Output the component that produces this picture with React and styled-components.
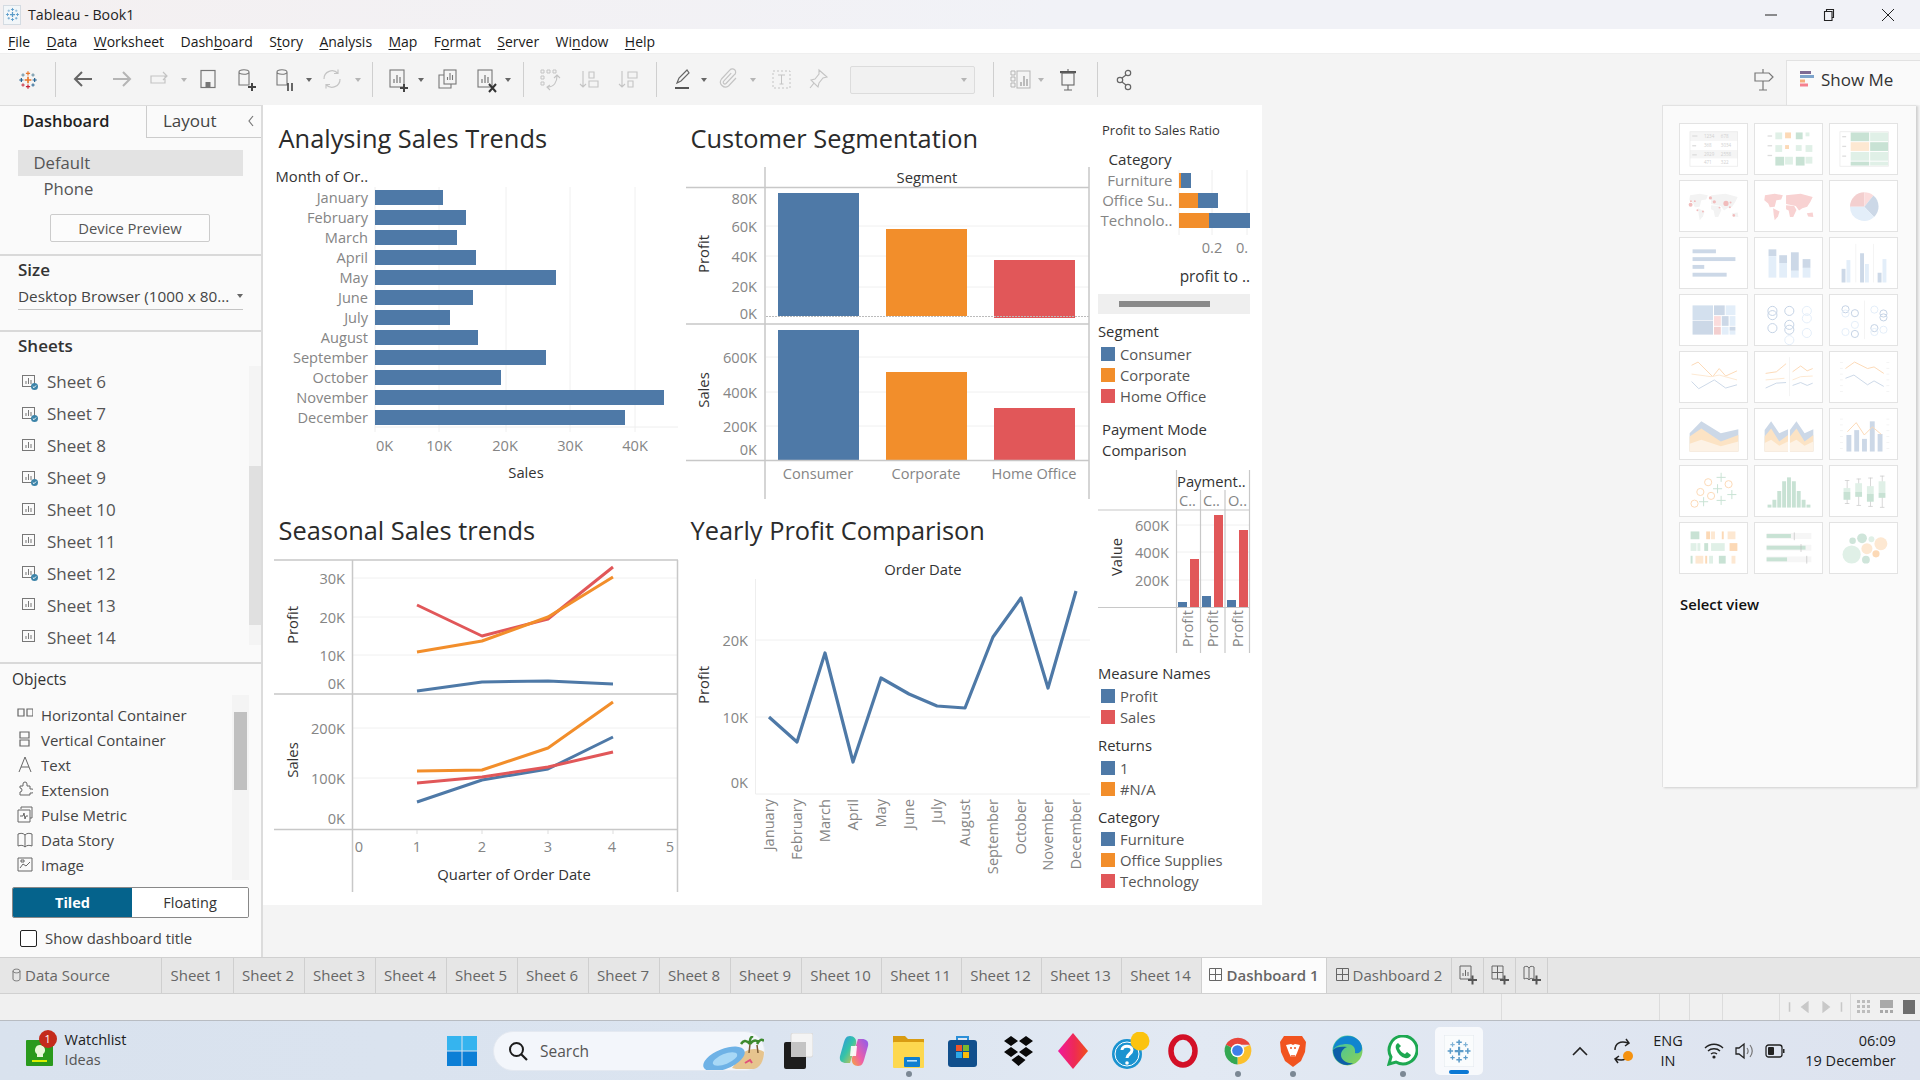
import React from "react";
import styled, { createGlobalStyle } from "styled-components";

const FONT = `"Open Sans", "Noto Sans", sans-serif`;
const BLUE = "#4e79a7";
const ORANGE = "#f28e2b";
const RED = "#e15759";

const GlobalStyle = createGlobalStyle`
  html, body { margin: 0; padding: 0; background: #f4f4f4; overflow: hidden; }
  * { box-sizing: border-box; }
`;

const Page = styled.div`
  width: 1920px;
  height: 1080px;
  display: flex;
  flex-direction: column;
  font-family: ${FONT};
  color: #333;
  overflow: hidden;
`;

/* ---------- window chrome ---------- */
const TitleBar = styled.div`
  height: 29px;
  display: flex;
  align-items: center;
  background: linear-gradient(90deg, #f4f0f1 0%, #f1f2f7 55%);
  font-size: 14.2px;
  color: #1f1f1f;
`;
const TitleIcon = styled.div`
  width: 18px;
  height: 20px;
  margin: 0 7px 0 3px;
  background: #f2f6f9;
  border: 1px solid #d4dbe2;
  display: flex;
  align-items: center;
  justify-content: center;
`;
const WindowButtons = styled.div`
  margin-left: auto;
  display: flex;
  align-items: center;
  padding-right: 25px;
  gap: 46px;
`;
const MenuBar = styled.div`
  height: 25px;
  background: #fff;
  display: flex;
  align-items: center;
  padding-left: 8px;
  gap: 16.4px;
  font-size: 14px;
  color: #1a1a1a;
  border-bottom: 1px solid #efefef;
`;
const Mnemonic = styled.span`
  text-decoration: underline;
  text-underline-offset: 2px;
`;
const Toolbar = styled.div`
  height: 51px;
  background: #f4f4f4;
  display: flex;
  align-items: center;
`;
const ToolSlot = styled.div`
  width: ${(p) => p.$w}px;
  margin-left: ${(p) => p.$gap}px;
  flex: none;
  display: flex;
  align-items: center;
  justify-content: center;
`;
const ToolSep = styled.div`
  width: 1px;
  height: 35px;
  background: #cfcfcf;
`;
const Caret = styled.div`
  width: 0;
  height: 0;
  border-left: 3px solid transparent;
  border-right: 3px solid transparent;
  border-top: 4px solid ${(p) => (p.$off ? "#b5b5b5" : "#666")};
`;
const SelectBox = styled.div`
  width: 125px;
  height: 28px;
  border: 1px solid #dcdcdc;
  border-radius: 2px;
  background: #f1f1f1;
  display: flex;
  align-items: center;
  justify-content: flex-end;
  padding-right: 7px;
`;
const ShowMeTab = styled.div`
  margin-left: auto;
  align-self: flex-end;
  width: 134px;
  height: 45px;
  background: #fafafa;
  border: 1px solid #e2e2e2;
  border-bottom: none;
  border-right: none;
  display: flex;
  align-items: center;
  padding: 0 0 8px 13px;
  gap: 7px;
  font-size: 17px;
  color: #333;
`;

/* ---------- side panel ---------- */
const Main = styled.div`
  height: 852px;
  display: flex;
`;
const Side = styled.div`
  width: 263px;
  flex: none;
  background: #fafafa;
  border-top: 1px solid #dcdcdc;
  border-right: 2px solid #dcdcdc;
  display: flex;
  flex-direction: column;
`;
const SideTabs = styled.div`
  height: 32px;
  display: flex;
`;
const SideTabActive = styled.div`
  width: 146px;
  padding-left: 22.5px;
  font-size: 16.4px;
  font-weight: 600;
  color: #222;
  line-height: 29px;
`;
const SideTab = styled.div`
  flex: 1;
  display: flex;
  align-items: center;
  justify-content: space-between;
  border-left: 1px solid #ccc;
  border-bottom: 1px solid #ccc;
  padding: 0 6px 2px 16px;
  font-size: 17px;
  color: #444;
`;
const Section = styled.div`
  height: ${(p) => p.$h}px;
  flex: none;
  border-bottom: ${(p) => (p.$last ? "none" : "2px solid #d9d9d9")};
  display: flex;
  flex-direction: column;
`;
const DeviceRow = styled.div`
  height: ${(p) => (p.$on ? "26px" : "25px")};
  margin: ${(p) => (p.$on ? "12px" : "0")} 18px 0;
  padding-left: ${(p) => (p.$on ? "15.5px" : "25.5px")};
  background: ${(p) => (p.$on ? "#e3e3e3" : "transparent")};
  font-size: 16.7px;
  line-height: 25px;
  color: #555;
`;
const PreviewButton = styled.div`
  width: 160px;
  height: 28px;
  margin: 13px 0 0 50px;
  border: 1px solid #ccc;
  border-radius: 2px;
  background: #fcfcfc;
  font-size: 14.8px;
  text-align: center;
  line-height: 26px;
  color: #555;
`;
const SectionHead = styled.div`
  font-size: ${(p) => p.$size || 17}px;
  font-weight: ${(p) => p.$weight || 600};
  color: #333;
  line-height: 22px;
  padding: ${(p) => p.$pad || "3px 0 0 18px"};
`;
const SizeSelect = styled.div`
  margin: 3px 18px 0 18px;
  height: 26px;
  padding-bottom: 2px;
  display: flex;
  align-items: center;
  justify-content: space-between;
  border-bottom: 1px solid #c4c4c4;
  font-size: 15.3px;
  color: #444;
  white-space: nowrap;
`;
const SheetsBody = styled.div`
  display: flex;
  margin-top: 9px;
  height: 279px;
`;
const SheetList = styled.div`
  flex: 1;
  padding: 0 0 0 22px;
`;
const SheetRow = styled.div`
  height: 31.9px;
  display: flex;
  align-items: center;
  gap: 9px;
  font-size: 17px;
  color: #555;
`;
const Track = styled.div`
  width: ${(p) => p.$w}px;
  background: #f4f4f4;
  display: flex;
  flex-direction: column;
  align-items: center;
  padding-top: ${(p) => p.$top}px;
  flex: none;
`;
const Thumb = styled.div`
  width: ${(p) => p.$w}px;
  height: ${(p) => p.$h}px;
  background: ${(p) => p.$c};
`;
const ObjectsBody = styled.div`
  display: flex;
  margin-top: 5px;
  height: 185px;
  padding-right: 12px;
`;
const ObjectList = styled.div`
  flex: 1;
  padding: 7px 0 0 17px;
`;
const ObjectRow = styled.div`
  height: 25px;
  display: flex;
  align-items: center;
  gap: 8px;
  font-size: 15px;
  color: #444;
`;
const Segmented = styled.div`
  margin: 7px 0 0 12px;
  width: 237px;
  height: 31px;
  display: flex;
  border: 1px solid #888;
  border-radius: 2px;
  overflow: hidden;
`;
const SegButton = styled.div`
  width: ${(p) => (p.$on ? "119px" : "auto")};
  flex: ${(p) => (p.$on ? "none" : "1")};
  background: ${(p) => (p.$on ? "#05638c" : "#fff")};
  color: ${(p) => (p.$on ? "#fff" : "#333")};
  font-weight: ${(p) => (p.$on ? 700 : 400)};
  font-size: 14.5px;
  line-height: 29px;
  text-align: center;
`;
const CheckRow = styled.div`
  display: flex;
  align-items: center;
  gap: 8px;
  margin: 10px 0 0 20px;
  font-size: 14.9px;
  color: #444;
`;
const CheckBox = styled.div`
  width: 17px;
  height: 17px;
  border: 1px solid #222;
  border-radius: 2px;
  background: #fff;
`;

/* ---------- dashboard ---------- */
const Canvas = styled.div`
  flex: 1;
  display: flex;
  align-items: flex-start;
  background: #f4f4f4;
`;
const Dashboard = styled.div`
  width: 999px;
  height: 800px;
  background: #fff;
  display: grid;
  grid-template-columns: 417px 410px 172px;
  grid-template-rows: 405px 395px;
`;
const Cell = styled.div`
  display: flex;
  flex-direction: column;
  min-width: 0;
`;
const RightColumn = styled.div`
  grid-column: 3;
  grid-row: 1 / span 2;
  display: flex;
  flex-direction: column;
`;
const SheetTitle = styled.div`
  font-size: 25.4px;
  line-height: 36px;
  height: ${(p) => p.$h}px;
  padding: ${(p) => p.$top}px 0 0 ${(p) => p.$left}px;
  color: #2b2b2b;
  white-space: nowrap;
`;
const ChartSvg = styled.svg`
  display: block;
  flex: none;
`;
const SmallTitle = styled.div`
  padding: ${(p) => p.$pad};
  font-size: ${(p) => p.$size}px;
  line-height: ${(p) => p.$line}px;
  font-weight: 500;
  color: #333;
  white-space: nowrap;
`;
const LegendBlock = styled.div`
  padding: ${(p) => p.$top}px 0 0 8px;
`;
const LegendTitle = styled.div`
  height: 24px;
  line-height: 24px;
  font-size: 14.8px;
  font-weight: 500;
  color: #333;
`;
const LegendRow = styled.div`
  height: 21px;
  display: flex;
  align-items: center;
  gap: 5px;
  padding-left: 3px;
  font-size: 14.8px;
  color: #555;
`;
const Swatch = styled.div`
  width: 14px;
  height: 14px;
  background: ${(p) => p.$c};
`;
const AxisText = styled.text`
  font-family: ${FONT};
  font-size: ${(p) => p.$size || 14.6}px;
  fill: #858585;
  dominant-baseline: central;
`;
const AxisTitle = styled.text`
  font-family: ${FONT};
  font-size: ${(p) => p.$size || 14.8}px;
  font-weight: 500;
  fill: #333;
  dominant-baseline: central;
`;
const DataLine = styled.polyline`
  fill: none;
  stroke: ${(p) => p.$c};
  stroke-width: ${(p) => p.$w || 3};
  stroke-linejoin: round;
`;

/* ---------- show me ---------- */
const ShowMePanel = styled.div`
  margin-left: auto;
  margin-right: 4px;
  width: 254px;
  height: 682px;
  background: #fafafa;
  border-left: 1px solid #e2e2e2;
  border-top: 1px solid #e2e2e2;
  box-shadow: 2px 1px 2px #cfcfcf;
  padding: 17px 0 0 16px;
`;
const TileGrid = styled.div`
  display: grid;
  grid-template-columns: repeat(3, 69px);
  grid-auto-rows: 52px;
  column-gap: 6px;
  row-gap: 5px;
`;
const Tile = styled.div`
  background: #fff;
  border: 1px solid #e3e3e3;
  overflow: hidden;
`;
const TileSvg = styled.svg`
  display: block;
  width: 100%;
  height: 100%;
`;
const SelectView = styled.div`
  margin: 20px 0 0 1px;
  font-size: 14.8px;
  font-weight: 600;
  color: #111;
`;

/* ---------- bottom bars ---------- */
const TabBar = styled.div`
  height: 37px;
  background: #e6e6e6;
  border-top: 1px solid #d0d0d0;
  border-bottom: 1px solid #d0d0d0;
  display: flex;
`;
const SheetTab = styled.div`
  width: ${(p) => p.$w}px;
  flex: none;
  display: flex;
  align-items: center;
  justify-content: ${(p) => (p.$left ? "flex-start" : "center")};
  gap: 4px;
  padding: 0 ${(p) => (p.$pr || 0)}px 2px ${(p) => (p.$left ? 12 : 0)}px;
  border-right: 1px solid #cfcfcf;
  background: ${(p) => (p.$on ? "#fcfcfc" : "transparent")};
  font-size: 15px;
  font-weight: ${(p) => (p.$on ? 600 : 400)};
  color: #666;
  white-space: nowrap;
`;
const StatusBar = styled.div`
  height: 27px;
  background: #f0f0f0;
  border-bottom: 1px solid #b8bcc2;
  display: flex;
`;
const StatusCell = styled.div`
  width: ${(p) => p.$w}px;
  flex: none;
  border-left: ${(p) => (p.$plain ? "none" : "1px solid #dcdcdc")};
  display: flex;
  align-items: center;
  justify-content: center;
  gap: ${(p) => p.$gap || 0}px;
`;
const TaskBar = styled.div`
  height: 59px;
  display: flex;
  align-items: center;
  background: linear-gradient(90deg, #d9e2ee 0%, #dbe4f0 40%, #e2e9f3 62%, #dde3ef 100%);
`;
const TaskItem = styled.div`
  width: ${(p) => p.$w}px;
  margin-left: ${(p) => p.$gap}px;
  flex: none;
  height: 48px;
  position: relative;
  display: flex;
  align-items: center;
  justify-content: center;
  border-radius: 5px;
  background: ${(p) => (p.$on ? "rgba(255,255,255,.75)" : "transparent")};
  &::after {
    content: "";
    display: ${(p) => (p.$dot ? "block" : "none")};
    position: absolute;
    bottom: ${(p) => (p.$on ? "1px" : "-2px")};
    left: 50%;
    transform: translateX(-50%);
    width: ${(p) => (p.$on ? "20px" : "6px")};
    height: ${(p) => (p.$on ? "4px" : "6px")};
    border-radius: 3px;
    background: ${(p) => (p.$on ? "#0a78d4" : "#7c8894")};
  }
`;
const Watch = styled.div`
  display: flex;
  align-items: center;
  gap: 12px;
`;
const WatchIcon = styled.div`
  position: relative;
  width: 27px;
  height: 27px;
  margin-top: 6px;
`;
const Badge = styled.div`
  position: absolute;
  left: 13px;
  top: -10px;
  width: 18px;
  height: 18px;
  border-radius: 50%;
  background: #c42b1c;
  color: #fff;
  font-size: 11px;
  line-height: 18px;
  text-align: center;
`;
const TwoLines = styled.div`
  font-size: ${(p) => p.$size || 14.5}px;
  line-height: 20px;
  text-align: ${(p) => p.$align || "left"};
  color: #1c1c1c;
  white-space: nowrap;
  margin-top: ${(p) => p.$up || 0}px;
`;
const Muted = styled.div`
  color: #555;
`;
const SearchPill = styled.div`
  width: 272px;
  height: 40px;
  border-radius: 20px;
  background: #f3f6fb;
  border: 1px solid #e4e9f1;
  display: flex;
  align-items: center;
  gap: 12px;
  padding-left: 14px;
  font-size: 15.5px;
  color: #555;
  position: relative;
`;
const SearchArt = styled.svg`
  position: absolute;
  right: 0;
  top: 4px;
`;

/* ---------- helpers ---------- */
const spaced = (items) => {
  let edge = 0;
  return items.map((it) => {
    const gap = it.x - edge;
    edge = it.x + it.w;
    return { ...it, gap };
  });
};

const Line = ({ d, c = "#666", w = 1.5, fill = "none" }) => (
  <path d={d} stroke={c} strokeWidth={w} fill={fill} />
);

const TableauMark = ({ size = 24, colored = true }) => {
  const plus = (x, y, r, c, w) => (
    <path key={`${x}-${y}`} d={`M${x - r} ${y}H${x + r}M${x} ${y - r}V${y + r}`} stroke={c} strokeWidth={w} />
  );
  const a = colored ? "#e8762c" : "#5b9bc9";
  const b = colored ? "#1f5f8f" : "#5b9bc9";
  const c = colored ? "#c72035" : "#5b9bc9";
  const d = colored ? "#5b879b" : "#7fb2d6";
  return (
    <svg width={size} height={size} viewBox="0 0 24 24">
      {plus(12, 12, 4, a, 2)}
      {plus(12, 4, 2.5, a, 1.4)}
      {plus(12, 20, 2.5, c, 1.4)}
      {plus(4, 12, 2.5, b, 1.4)}
      {plus(20, 12, 2.5, b, 1.4)}
      {plus(6, 6, 2, d, 1.1)}
      {plus(18, 6, 2, d, 1.1)}
      {plus(6, 18, 2, c, 1.1)}
      {plus(18, 18, 2, b, 1.1)}
    </svg>
  );
};

const ICONS = {
  back: <Line d="M21 12H4M11 5l-7 7 7 7" c="#666" w={2} />,
  forward: <Line d="M3 12h17M13 5l7 7-7 7" c="#b5b5b5" w={2} />,
  swap: <Line d="M4 9h14v7H4zM12 9h8M16 5l4 4-4 4" c="#c4c4c4" w={1.2} />,
  save: (
    <>
      <rect x="5" y="3.5" width="14" height="17" fill="none" stroke="#777" strokeWidth="1.2" />
      <rect x="9.5" y="15" width="5" height="5" fill="#777" />
    </>
  ),
  cylPlus: (
    <>
      <Line d="M4 5c0-3 10-3 10 0v13H4zM4 5c0 3 10 3 10 0" c="#777" w={1.1} />
      <Line d="M13 20h8M17 16v8" c="#444" w={2} />
    </>
  ),
  cylPause: (
    <>
      <Line d="M4 5c0-3 10-3 10 0v13H4zM4 5c0 3 10 3 10 0" c="#777" w={1.1} />
      <Line d="M15 16v8M19 16v8" c="#444" w={1.6} />
    </>
  ),
  refresh: <Line d="M20 12a8 8 0 0 1-14 5.5M4 12a8 8 0 0 1 14-5.5M18 2.5v4h-4M6 21.5v-4h4" c="#c4c4c4" w={1.2} />,
  newSheet: (
    <>
      <rect x="4" y="3" width="14" height="17" fill="none" stroke="#777" strokeWidth="1.1" />
      <Line d="M8 16v-4M11 16V8M14 16v-6" c="#777" w={1.2} />
      <Line d="M14 21h8M18 17v8" c="#444" w={2} />
    </>
  ),
  dupSheet: (
    <>
      <rect x="9" y="3" width="12" height="14" fill="#f4f4f4" stroke="#777" strokeWidth="1.1" />
      <Line d="M12.500 13v-3M15 13V6M17.500 13V8" c="#777" w={1.1} />
      <Line d="M9 8H4v13h12v-4" c="#777" w={1.1} />
    </>
  ),
  clearSheet: (
    <>
      <rect x="4" y="3" width="14" height="17" fill="none" stroke="#777" strokeWidth="1.1" />
      <Line d="M8 16v-4M11 16V8M14 16v-6" c="#777" w={1.2} />
      <Line d="M15 17l7 8M22 17l-7 8" c="#333" w={2} />
    </>
  ),
  swapRows: (
    <>
      <Line d="M4 3h3v3H4zM10 3h3v3h-3zM16 3h3v3h-3zM4 9h3v3H4zM4 15h3v3H4z" c="#c4c4c4" w={1} />
      <Line d="M20 9c0 6-3 11-9 11M13 18l-3 2 3 3M17 11l3-3 3 3" c="#c4c4c4" w={1.1} />
    </>
  ),
  sortAsc: <Line d="M6 4v16M3 17l3 3 3-3M12 5h5v6h-5zM12 14h9v6h-9z" c="#c4c4c4" w={1.1} />,
  sortDesc: <Line d="M6 4v16M3 17l3 3 3-3M12 5h9v6h-9zM12 14h5v6h-5z" c="#c4c4c4" w={1.1} />,
  pen: (
    <>
      <Line d="M6 16l2-5L16 3l2 3-8 8zM6 16l4-2" c="#666" w={1.2} />
      <rect x="4" y="20" width="14" height="2" fill="#555" />
    </>
  ),
  clip: <Line d="m19 11-7.500 8a5 5 0 0 1-7-7l8-8.500A3.300 3.300 0 1 1 17 8l-8 8.500a1.600 1.600 0 0 1-2.300-2.300l7.500-8" c="#c4c4c4" w={1.2} />,
  tbox: (
    <>
      <rect x="4" y="4" width="17" height="17" fill="none" stroke="#c4c4c4" strokeWidth="1" strokeDasharray="2 2" />
      <Line d="M9 8h7M12.500 8v9M10.500 17h4" c="#c4c4c4" w={1} />
    </>
  ),
  pin: <Line d="M13 3l8 7-4 1-4 5-1 4-4-4-4 5 4-5-3-3 4-1 4-5z" c="#c4c4c4" w={1.1} />,
  cards: (
    <>
      <Line d="M3 4h4v4H3zM3 10h4v4H3zM3 16h4v4H3z" c="#b5b5b5" w={1} />
      <rect x="9" y="4" width="13" height="17" fill="none" stroke="#b5b5b5" />
      <Line d="M13 19v-4M16 19V9M19 19v-7" c="#b5b5b5" w={1.8} />
    </>
  ),
  present: (
    <>
      <rect x="4" y="4" width="16" height="2.200" fill="#555" />
      <rect x="6" y="6" width="12" height="12" fill="none" stroke="#666" strokeWidth="1.1" />
      <Line d="M12 2v2M12 18v5M8 23h8" c="#666" w={1.1} />
    </>
  ),
  share: (
    <>
      <circle cx="16" cy="6" r="2.700" fill="none" stroke="#666" strokeWidth="1.2" />
      <circle cx="8" cy="13" r="2.700" fill="none" stroke="#666" strokeWidth="1.2" />
      <circle cx="16" cy="20" r="2.700" fill="none" stroke="#666" strokeWidth="1.2" />
      <Line d="M14 8l-4 3M10 15l4 3" c="#666" w={1.2} />
    </>
  ),
  sign: (
    <>
      <Line d="M3 6h14l4 4-4 4H3zM11 2v4M11 14v9M7 23h8" c="#777" w={1.2} />
    </>
  ),
};

const Tool = ({ name }) => (
  <svg width="24" height="26" viewBox="0 0 24 26">
    {ICONS[name]}
  </svg>
);

const TOOLS = spaced([
  { x: 18, w: 20, el: <TableauMark size={20} /> },
  { x: 55, w: 1, el: <ToolSep /> },
  { x: 71, w: 24, el: <Tool name="back" /> },
  { x: 110, w: 24, el: <Tool name="forward" /> },
  { x: 147, w: 24, el: <Tool name="swap" /> },
  { x: 181, w: 6, el: <Caret $off /> },
  { x: 196, w: 24, el: <Tool name="save" /> },
  { x: 235, w: 24, el: <Tool name="cylPlus" /> },
  { x: 273, w: 24, el: <Tool name="cylPause" /> },
  { x: 306, w: 6, el: <Caret /> },
  { x: 320, w: 24, el: <Tool name="refresh" /> },
  { x: 355, w: 6, el: <Caret $off /> },
  { x: 372, w: 1, el: <ToolSep /> },
  { x: 386, w: 24, el: <Tool name="newSheet" /> },
  { x: 418, w: 6, el: <Caret /> },
  { x: 435, w: 24, el: <Tool name="dupSheet" /> },
  { x: 474, w: 24, el: <Tool name="clearSheet" /> },
  { x: 505, w: 6, el: <Caret /> },
  { x: 523, w: 1, el: <ToolSep /> },
  { x: 537, w: 24, el: <Tool name="swapRows" /> },
  { x: 577, w: 24, el: <Tool name="sortAsc" /> },
  { x: 616, w: 24, el: <Tool name="sortDesc" /> },
  { x: 656, w: 1, el: <ToolSep /> },
  { x: 671, w: 24, el: <Tool name="pen" /> },
  { x: 701, w: 6, el: <Caret /> },
  { x: 717, w: 24, el: <Tool name="clip" /> },
  { x: 750, w: 6, el: <Caret $off /> },
  { x: 769, w: 24, el: <Tool name="tbox" /> },
  { x: 806, w: 24, el: <Tool name="pin" /> },
  { x: 850, w: 125, el: <SelectBox><Caret $off /></SelectBox> },
  { x: 993, w: 1, el: <ToolSep /> },
  { x: 1008, w: 24, el: <Tool name="cards" /> },
  { x: 1038, w: 6, el: <Caret $off /> },
  { x: 1056, w: 24, el: <Tool name="present" /> },
  { x: 1097, w: 1, el: <ToolSep /> },
  { x: 1112, w: 24, el: <Tool name="share" /> },
  { x: 1752, w: 24, el: <Tool name="sign" /> },
]);

const MENU = [
  ["", "F", "ile"],
  ["", "D", "ata"],
  ["", "W", "orksheet"],
  ["Dash", "b", "oard"],
  ["S", "t", "ory"],
  ["", "A", "nalysis"],
  ["", "M", "ap"],
  ["F", "o", "rmat"],
  ["", "S", "erver"],
  ["Wi", "n", "dow"],
  ["", "H", "elp"],
];

const SHEET_ROWS = [
  ["Sheet 6", true],
  ["Sheet 7", true],
  ["Sheet 8", false],
  ["Sheet 9", true],
  ["Sheet 10", false],
  ["Sheet 11", false],
  ["Sheet 12", true],
  ["Sheet 13", false],
  ["Sheet 14", false],
];

const SheetIcon = ({ used }) => (
  <svg width="16" height="16" viewBox="0 0 16 16">
    <rect x="0.5" y="1.5" width="12" height="11" fill="none" stroke="#777" />
    <path d="M4 10V7M6.5 10V4M9 10V6" stroke="#777" strokeWidth="1" />
    {used && (
      <>
        <circle cx="12.5" cy="12.5" r="3.5" fill="#3b83a8" />
        <path d="M10.8 12.5l1.2 1.2 2-2.2" stroke="#fff" strokeWidth="1" fill="none" />
      </>
    )}
  </svg>
);

const OBJECTS = [
  ["Horizontal Container", <Line d="M1 3h6v7H1zM10 3h6v7h-6z" c="#666" w={1.2} />],
  ["Vertical Container", <Line d="M3 1h9v6H3zM3 9h9v6H3z" c="#666" w={1.2} />],
  ["Text", <Line d="M2 16L8 1l6 15M4 11h8" c="#666" w={1} />],
  ["Extension", <Line d="M6 3a2 2 0 0 1 4 0v2h3v3h2a2 2 0 0 1 0 4h-2v2H3v-3a2 2 0 0 0 0-4V5h3z" c="#666" w={1} />],
  ["Pulse Metric", <Line d="M4 3V1h11v11h-2M1 4h12v12H1zM3 10h3l1-3 1 6 1-3h2" c="#666" w={1} />],
  ["Data Story", <Line d="M1 3c3-1 5-1 7 1 2-2 4-2 7-1v12c-3-1-5-1-7 1-2-2-4-2-7-1zM8 4v12" c="#666" w={1} />],
  ["Image", <Line d="M1 2h14v13H1zM3 12l3-4 3 2 4-4M4 4h3v2H4z" c="#666" w={1} />],
];

const MONTHS = [
  ["January", 68], ["February", 91], ["March", 82], ["April", 101], ["May", 181], ["June", 98],
  ["July", 75], ["August", 103], ["September", 171], ["October", 126], ["November", 289], ["December", 250],
];

const pts = (list) => list.map((p) => p.join(",")).join(" ");

/* viewBoxes below use page coordinates, so the numbers read straight off the screenshot */
const SalesBars = () => (
  <ChartSvg width="417" height="350" viewBox="263 160 417 350">
    {[439, 506, 570, 635].map((x) => (
      <line key={x} x1={x} x2={x} y1="187" y2="432" stroke="#f0f0f0" />
    ))}
    <line x1="375" x2="375" y1="187" y2="432" stroke="#eee" />
    <line x1="375" x2="678" y1="427" y2="427" stroke="#eee" />
    <AxisTitle x="275.5" y="176">Month of Or..</AxisTitle>
    {MONTHS.map(([m, w], i) => (
      <g key={m}>
        <AxisText x="368" y={196.5 + i * 20} textAnchor="end">{m}</AxisText>
        <rect x="375" y={190 + i * 20} width={w} height="15" fill={BLUE} />
      </g>
    ))}
    <AxisText x="376" y="445">0K</AxisText>
    {[[439, "10K"], [505, "20K"], [570, "30K"], [635, "40K"]].map(([x, t]) => (
      <AxisText key={t} x={x} y="445" textAnchor="middle">{t}</AxisText>
    ))}
    <AxisTitle x="526" y="472" textAnchor="middle">Sales</AxisTitle>
  </ChartSvg>
);

const SEG_X = [778, 886, 994];
const SEG_C = [BLUE, ORANGE, RED];

const Segmentation = () => (
  <ChartSvg width="410" height="350" viewBox="680 160 410 350">
    {[226, 256, 287, 357, 392, 426].map((y) => (
      <line key={y} x1="766" x2="1089" y1={y} y2={y} stroke="#f0f0f0" />
    ))}
    <AxisTitle x="927" y="177" textAnchor="middle">Segment</AxisTitle>
    {[[193, 316], [229, 316], [260, 318]].map(([t, b], i) => (
      <rect key={t} x={SEG_X[i]} y={t} width="81" height={b - t} fill={SEG_C[i]} />
    ))}
    {[[330, 460], [372, 460], [408, 460]].map(([t, b], i) => (
      <rect key={t} x={SEG_X[i]} y={t} width="81" height={b - t} fill={SEG_C[i]} />
    ))}
    <line x1="766" x2="1089" y1="316.5" y2="316.5" stroke="#bbb" strokeDasharray="2 1" />
    <path d="M765 167V499M1089 167V499M686 187.5H1089M686 324H1089M686 460.5H1089" stroke="#c8c8c8" fill="none" strokeWidth="1.5" />
    {[[198, "80K"], [226, "60K"], [256, "40K"], [286, "20K"], [313, "0K"], [357, "600K"], [392, "400K"], [426, "200K"], [449, "0K"]].map(([y, t]) => (
      <AxisText key={`${t}${y}`} x="757" y={y} textAnchor="end">{t}</AxisText>
    ))}
    <AxisTitle x="703" y="254" textAnchor="middle" transform="rotate(-90 703 254)">Profit</AxisTitle>
    <AxisTitle x="703" y="390" textAnchor="middle" transform="rotate(-90 703 390)">Sales</AxisTitle>
    {[[818, "Consumer"], [926, "Corporate"], [1034, "Home Office"]].map(([x, t]) => (
      <AxisText key={t} x={x} y="473" textAnchor="middle">{t}</AxisText>
    ))}
  </ChartSvg>
);

const QX = [417, 482, 548, 613];
const Seasonal = () => {
  const line = (ys, c) => <DataLine key={ys[0]} points={pts(ys.map((y, i) => [QX[i], y]))} $c={c} />;
  return (
    <ChartSvg width="417" height="355" viewBox="263 550 417 355">
      {[578, 617, 655, 728, 778].map((y) => (
        <line key={y} x1="353" x2="677" y1={y} y2={y} stroke="#f0f0f0" />
      ))}
      <path d="M274 560H678M274 694H678M274 829.5H678M352.5 560V892M677.5 560V892" stroke="#c8c8c8" fill="none" strokeWidth="1.5" />
      {QX.map((x) => (
        <line key={x} x1={x} x2={x} y1="830" y2="834" stroke="#ddd" />
      ))}
      {line([605, 636, 619, 567], RED)}
      {line([652, 641, 617, 577], ORANGE)}
      {line([691, 682, 681, 684], BLUE)}
      {line([771, 770, 748, 702], ORANGE)}
      {line([802, 780, 769, 737], BLUE)}
      {line([783, 777, 767, 752], RED)}
      {[[578, "30K"], [617, "20K"], [654.500, "10K"], [683, "0K"], [728, "200K"], [777.500, "100K"], [818, "0K"]].map(([y, t]) => (
        <AxisText key={`${t}${y}`} x="345" y={y} textAnchor="end">{t}</AxisText>
      ))}
      <AxisTitle x="291.500" y="625" textAnchor="middle" transform="rotate(-90 291.500 625)">Profit</AxisTitle>
      <AxisTitle x="291.500" y="760" textAnchor="middle" transform="rotate(-90 291.500 760)">Sales</AxisTitle>
      {[[359, "0"], [417, "1"], [482, "2"], [548, "3"], [612, "4"], [670, "5"]].map(([x, t]) => (
        <AxisText key={t} x={x} y="846" textAnchor="middle">{t}</AxisText>
      ))}
      <AxisTitle x="514" y="874" textAnchor="middle">Quarter of Order Date</AxisTitle>
    </ChartSvg>
  );
};

const YEARLY = [
  [769, 717], [797, 742], [825, 653], [853, 762], [881, 678], [909, 694],
  [937, 706], [965, 708], [993, 637], [1021, 598], [1048, 688], [1076, 591],
];
const Yearly = () => (
  <ChartSvg width="410" height="355" viewBox="680 550 410 355">
    {[640, 717].map((y) => (
      <line key={y} x1="756" x2="1090" y1={y} y2={y} stroke="#f0f0f0" />
    ))}
    <path d="M755.5 579V794H1090" stroke="#eee" fill="none" />
    <AxisTitle x="923" y="569" textAnchor="middle">Order Date</AxisTitle>
    <DataLine points={pts(YEARLY)} $c={BLUE} $w={3.2} />
    {[[640, "20K"], [716.500, "10K"], [782, "0K"]].map(([y, t]) => (
      <AxisText key={t} x="748" y={y} textAnchor="end">{t}</AxisText>
    ))}
    <AxisTitle x="703" y="685" textAnchor="middle" transform="rotate(-90 703 685)">Profit</AxisTitle>
    {MONTHS.map(([m], i) => (
      <AxisText key={m} x={YEARLY[i][0] - 1} y="799" textAnchor="end" transform={`rotate(-90 ${YEARLY[i][0] - 1} 799)`}>{m}</AxisText>
    ))}
  </ChartSvg>
);

const RatioBars = () => (
  <ChartSvg width="172" height="178" viewBox="1090 141 172 178">
    {[1179, 1212, 1247].map((x) => (
      <line key={x} x1={x} x2={x} y1="170" y2="235" stroke="#eee" />
    ))}
    <AxisTitle x="1108.5" y="159" $size={15.2}>Category</AxisTitle>
    {[["Furniture", 180], ["Office Su..", 200], ["Technolo..", 220]].map(([t, y]) => (
      <AxisText key={t} x="1172.5" y={y} textAnchor="end" $size={15}>{t}</AxisText>
    ))}
    <rect x="1179" y="173" width="2" height="15" fill={ORANGE} />
    <rect x="1181" y="173" width="10" height="15" fill={BLUE} />
    <rect x="1179" y="193" width="19" height="15" fill={ORANGE} />
    <rect x="1198" y="193" width="20" height="15" fill={BLUE} />
    <rect x="1179" y="213" width="30" height="15" fill={ORANGE} />
    <rect x="1209" y="213" width="41" height="15" fill={BLUE} />
    <AxisText x="1212" y="247" textAnchor="middle">0.2</AxisText>
    <AxisText x="1236" y="247">0.</AxisText>
    <AxisTitle x="1250" y="276" textAnchor="end" $size={15.4}>profit to ..</AxisTitle>
    <rect x="1098" y="294" width="152" height="20" fill="#efefef" />
    <rect x="1119" y="301" width="91" height="6" fill="#8a8a8a" />
  </ChartSvg>
);

const PAY_BARS = [
  [1178, BLUE, 604], [1190, RED, 561], [1202, BLUE, 598], [1214, RED, 517], [1227, BLUE, 602], [1239, RED, 532],
];
const PaymentBars = () => (
  <ChartSvg width="172" height="198" viewBox="1090 462 172 198">
    {[527, 554, 582].map((y) => (
      <line key={y} x1="1177" x2="1249" y1={y} y2={y} stroke="#f0f0f0" />
    ))}
    {PAY_BARS.map(([x, c, t]) => (
      <rect key={x} x={x} y={t} width="9" height={609 - t} fill={c} />
    ))}
    <path d="M1176.5 472V655M1249.5 472V655M1200.5 492V655M1225 492V655M1098 512H1250M1098 609.5H1250" stroke="#c8c8c8" fill="none" strokeWidth="1.2" />
    <AxisTitle x="1177" y="482.5">Payment..</AxisTitle>
    {[[1179, "C.."], [1203, "C.."], [1228, "O.."]].map(([x, t]) => (
      <AxisText key={x} x={x} y="502">{t}</AxisText>
    ))}
    {[[527, "600K"], [554, "400K"], [582, "200K"]].map(([y, t]) => (
      <AxisText key={t} x="1169" y={y} textAnchor="end">{t}</AxisText>
    ))}
    <AxisTitle x="1115.500" y="559" textAnchor="middle" transform="rotate(-90 1115.500 559)">Value</AxisTitle>
    {[1187, 1212, 1237].map((x) => (
      <AxisText key={x} x={x} y="612" textAnchor="end" transform={`rotate(-90 ${x} 612)`}>Profit</AxisText>
    ))}
  </ChartSvg>
);

const Legend = ({ title, rows, top }) => (
  <LegendBlock $top={top}>
    <LegendTitle>{title}</LegendTitle>
    {rows.map(([t, c]) => (
      <LegendRow key={t}>
        <Swatch $c={c} />
        {t}
      </LegendRow>
    ))}
  </LegendBlock>
);

/* ---------- show me thumbnails, drawn in zoomed crop units ---------- */
const G1 = "#c8e2d4";
const G2 = "#e0f0e7";
const O1 = "#fcd9b6";
const O2 = "#fde8d2";
const B1 = "#ccd8e7";
const B2 = "#e3eef9";
const DASH = "#dddddd";

const world = (dx, c) => [
  [[85, 285], [115, 280], [140, 285], [135, 298], [120, 300], [115, 320], [100, 322], [95, 310], [83, 300]],
  [[110, 325], [130, 335], [125, 350], [115, 362], [112, 345]],
  [[150, 285], [195, 280], [232, 290], [225, 305], [215, 320], [200, 325], [190, 332], [180, 318], [165, 315], [150, 312]],
  [[150, 316], [175, 318], [182, 330], [172, 352], [162, 352], [158, 332], [150, 328]],
  [[214, 340], [232, 338], [234, 352], [218, 350]],
].map((p) => [p.map(([x, y]) => [x + dx, y]), c]);

const ticks = (xs, y0, y1) => {
  const out = [];
  for (let y = y0; y <= y1; y += 18) xs.forEach((x) => out.push([x, y, 9, 2, "#eeeeee"]));
  return out;
};
const circles = (list, c, r = 14, w = 2) => list.map(([x, y]) => [x, y, r, c, w]);

const TILES = [
  {
    r: [[85, 94, 147, 28, "#f5f5f5"], [85, 150, 147, 26, "#f5f5f5"], [92, 105, 16, 4, DASH], [92, 135, 12, 4, DASH], [92, 163, 14, 4, DASH]],
    b: [[85, 94, 147, 106]],
    t: [[128, 113, "1234"], [180, 113, "678"], [128, 140, "368"], [180, 140, "3034"], [128, 168, "2929"], [180, 168, "2558"], [128, 192, "471"], [180, 192, "322"]],
  },
  {
    r: [[318, 105, 14, 4, DASH], [318, 135, 14, 4, DASH], [318, 165, 14, 4, DASH],
      [342, 96, 21, 21, G2], [372, 96, 18, 18, O1], [405, 96, 21, 21, G1], [435, 96, 12, 12, G2],
      [342, 135, 21, 21, G2], [372, 135, 12, 12, O1], [405, 135, 18, 18, G2], [435, 135, 21, 21, G2],
      [342, 171, 27, 27, G1], [372, 171, 24, 24, G2], [405, 171, 27, 27, G1], [435, 171, 21, 21, G2]],
  },
  {
    r: [[568, 96, 57, 27, G1], [628, 96, 55, 27, G2], [568, 126, 57, 27, O2], [628, 126, 55, 27, G1],
      [568, 156, 57, 27, G2], [628, 156, 55, 27, G2], [568, 186, 57, 12, G1], [628, 186, 55, 12, G2],
      [542, 107, 12, 4, DASH], [542, 137, 12, 4, DASH], [542, 167, 12, 4, DASH]],
    b: [[535, 94, 150, 106]],
  },
  {
    p: world(0, "#f3f3f3"),
    c: [[87, 314, 6], [88, 303, 3], [100, 303, 3], [148, 293, 5], [160, 305, 5], [196, 310, 8], [210, 307, 3], [208, 322, 3], [125, 335, 3], [220, 347, 4], [176, 323, 3], [108, 331, 3]].map(([x, y, r]) => [x, y, r, "#f1bcbc", 0]),
  },
  { p: world(225, "#f8d2d2") },
  {
    d: [["M610 320L566 320A44 44 0 0 1 610 276Z", "#f3cfcf"], ["M610 320L610 276A44 44 0 0 1 638 286Z", "#fbdcdc"], ["M610 320L638 286A44 44 0 0 1 640 352Z", B1], ["M610 320L640 352A44 44 0 0 1 566 320Z", B2]],
  },
  { r: [[93, 447, 72, 12, B1], [93, 471, 132, 12, B1], [93, 495, 36, 12, B1], [93, 519, 105, 12, B1]] },
  {
    r: [[321, 447, 24, 21, B1], [321, 468, 24, 66, B2], [354, 465, 24, 24, B1], [354, 489, 24, 45, B2],
      [390, 456, 24, 57, B1], [390, 513, 24, 21, B2], [426, 477, 24, 27, B1], [426, 504, 24, 30, B2]],
  },
  {
    r: [[540, 507, 12, 42, B1], [555, 480, 12, 69, B2], [597, 459, 12, 90, B1], [612, 492, 12, 57, B2], [651, 519, 12, 30, B1], [666, 477, 12, 72, B2],
      [583, 430, 2, 119, "#eeeeee"], [637, 430, 2, 119, "#eeeeee"]],
  },
  {
    r: [[93, 615, 63, 45, "#d3e0ee"], [93, 662, 63, 43, B1], [159, 615, 33, 30, B1], [195, 615, 30, 30, B2], [159, 648, 21, 30, "#fbdcdc"], [159, 681, 21, 24, "#f3cfcf"],
      [183, 648, 21, 30, B1], [207, 648, 18, 30, B2], [183, 681, 21, 24, B2], [207, 681, 18, 12, B1], [207, 694, 18, 11, B2]],
  },
  {
    c: [...circles([[333, 632], [333, 645], [385, 632], [333, 685], [385, 675], [385, 690]], "#c3d2e4"), ...circles([[439, 632], [439, 655], [439, 700], [385, 722]], B2)],
  },
  {
    r: [[610, 600, 2, 119, "#eeeeee"]],
    c: [...circles([[552, 627], [581, 639], [669, 640], [669, 652], [581, 703], [641, 685]], "#c3d2e4", 11),
      ...circles([[552, 640], [641, 628], [552, 697], [581, 675], [641, 697], [669, 690]], B2, 11)],
  },
  {
    l: [[[[90, 795], [110, 785], [155, 830], [175, 805], [195, 828], [230, 812]], O1], [[[90, 822], [150, 830], [175, 825], [230, 840]], O2], [[[90, 845], [112, 867], [160, 840], [195, 865], [230, 855]], B1]],
  },
  {
    r: [[385, 770, 2, 120, "#eeeeee"]],
    l: [[[[312, 820], [345, 815], [375, 790]], O1], [[[395, 815], [420, 797], [440, 812], [457, 805]], O1], [[[312, 840], [370, 835]], O2], [[[395, 840], [420, 830], [457, 828]], O2], [[[312, 865], [345, 850], [375, 848]], B1], [[[395, 857], [420, 848], [440, 857], [457, 850]], B1]],
  },
  {
    r: ticks([535, 678], 785, 875),
    l: [[[[552, 805], [580, 785], [620, 805], [640, 800], [670, 820]], O1], [[[552, 835], [578, 825], [620, 855], [640, 843], [670, 860]], B1]],
  },
  {
    p: [[[[84, 1000], [120, 963], [180, 1000], [234, 987], [234, 1056], [84, 1056]], B1], [[[84, 1010], [120, 985], [180, 1025], [234, 1005], [234, 1056], [84, 1056]], "#fce3c4"], [[[84, 1032], [120, 1020], [180, 1040], [234, 1025], [234, 1056], [84, 1056]], "#fdf2e5"]],
  },
  {
    p: [309, 387].flatMap((x) => [[[[x, 990], [x + 20, 963], [x + 45, 1000], [x + 72, 987], [x + 72, 1056], [x, 1056]], B1], [[[x, 1010], [x + 20, 985], [x + 45, 1025], [x + 72, 1005], [x + 72, 1056], [x, 1056]], "#fce3c4"], [[[x, 1030], [x + 20, 1020], [x + 45, 1038], [x + 72, 1025], [x + 72, 1056], [x, 1056]], "#fdf2e5"]]),
  },
  {
    r: [...ticks([535, 678], 955, 1045), [555, 1005, 15, 51, B1], [579, 990, 15, 66, B1], [603, 1017, 15, 39, B1], [627, 963, 15, 93, B1], [651, 1002, 15, 54, B1]],
    l: [[[[558, 995], [585, 967], [610, 1005], [635, 980], [662, 1003]], O1]],
  },
  {
    c: [[141, 1146, 11, O1, 2], [204, 1152, 11, O1, 2], [117, 1176, 11, O1, 2], [150, 1188, 11, O1, 2], [99, 1212, 11, O1, 2]],
    l: [[181, 1131], [170, 1166], [214, 1184], [127, 1206], [181, 1202]].flatMap(([x, y]) => [[[[x - 14, y], [x + 14, y]], G1], [[[x, y - 14], [x, y + 14]], G1]]),
  },
  {
    r: [[318, 1215, 12, 9], [333, 1200, 12, 24], [348, 1173, 12, 51], [363, 1143, 12, 81], [378, 1131, 12, 93], [393, 1143, 12, 81], [408, 1173, 12, 51], [423, 1200, 12, 24], [438, 1215, 12, 9]].map((b) => [...b, G1]),
  },
  {
    r: [[556, 1140, 2, 72, "#c4c4c4"], [592, 1135, 2, 82, "#c4c4c4"], [628, 1132, 2, 88, "#c4c4c4"], [664, 1126, 2, 97, "#c4c4c4"],
      [550, 1140, 14, 2, "#c4c4c4"], [550, 1211, 14, 2, "#c4c4c4"], [586, 1135, 14, 2, "#c4c4c4"], [586, 1216, 14, 2, "#c4c4c4"], [622, 1132, 14, 2, "#c4c4c4"], [622, 1219, 14, 2, "#c4c4c4"], [658, 1126, 14, 2, "#c4c4c4"], [658, 1222, 14, 2, "#c4c4c4"],
      [546, 1164, 21, 12, G2], [546, 1176, 21, 24, G1], [582, 1149, 21, 27, G2], [582, 1176, 21, 15, G1], [618, 1158, 21, 24, G2], [618, 1182, 21, 24, G1], [654, 1143, 21, 36, G2], [654, 1179, 21, 15, G1]],
  },
  {
    r: [[87, 1293, 27, 24, G1], [135, 1293, 12, 24, O1], [150, 1293, 12, 24, O2], [183, 1293, 6, 24, O1], [201, 1293, 24, 24, O2],
      [87, 1329, 18, 24, G2], [108, 1329, 9, 24, G2], [129, 1329, 12, 24, G1], [150, 1329, 42, 24, G2], [207, 1329, 24, 24, O1],
      [87, 1368, 6, 24, G1], [102, 1368, 24, 24, O2], [132, 1368, 6, 24, O1], [144, 1368, 12, 24, G2], [174, 1368, 21, 24, G1], [213, 1368, 12, 24, O2]],
  },
  {
    r: [[315, 1298, 138, 18, "#f6f6f6"], [315, 1334, 138, 18, "#f6f6f6"], [315, 1370, 138, 18, "#f6f6f6"], [315, 1301, 75, 12, G1], [315, 1337, 120, 12, G1], [315, 1373, 63, 12, G1],
      [399, 1296, 2, 24, "#bdbdbd"], [420, 1332, 2, 24, "#bdbdbd"], [438, 1368, 2, 24, "#bdbdbd"]],
  },
  {
    c: [[574, 1322, 10, "#cfe5da", 0], [603, 1314, 15, "#cfe5da", 0], [632, 1317, 9, G2, 0], [661, 1331, 20, O2, 0], [618, 1346, 17, O2, 0], [646, 1362, 11, O1, 0], [571, 1364, 28, G2, 0], [615, 1380, 12, "#cfe5da", 0]],
  },
];

const MiniChart = ({ tile, col, row }) => {
  const ox = 55 + col * 225;
  const oy = 70 + row * 171;
  return (
    <TileSvg viewBox={`${ox} ${oy} 205 154`}>
      {(tile.r || []).map(([x, y, w, h, c], i) => (
        <rect key={i} x={x} y={y} width={w} height={h} fill={c} />
      ))}
      {(tile.b || []).map(([x, y, w, h], i) => (
        <rect key={i} x={x} y={y} width={w} height={h} fill="none" stroke="#e6e6e6" strokeWidth="2" />
      ))}
      {(tile.t || []).map(([x, y, t], i) => (
        <text key={i} x={x} y={y} fontSize="14" fill="#d0d0d0" fontFamily={FONT}>{t}</text>
      ))}
      {(tile.p || []).map(([p, c], i) => (
        <polygon key={i} points={pts(p)} fill={c} />
      ))}
      {(tile.d || []).map(([d, c], i) => (
        <path key={i} d={d} fill={c} />
      ))}
      {(tile.l || []).map(([p, c], i) => (
        <polyline key={i} points={pts(p)} fill="none" stroke={c} strokeWidth="3" />
      ))}
      {(tile.c || []).map(([x, y, r, c, w], i) => (
        <circle key={i} cx={x} cy={y} r={r} fill={w ? "none" : c} stroke={w ? c : "none"} strokeWidth={w * 1.5} />
      ))}
    </TileSvg>
  );
};

const SHEET_TABS = [
  ["Sheet 1", 72], ["Sheet 2", 71], ["Sheet 3", 71], ["Sheet 4", 71], ["Sheet 5", 71], ["Sheet 6", 71],
  ["Sheet 7", 71], ["Sheet 8", 71], ["Sheet 9", 71], ["Sheet 10", 80], ["Sheet 11", 80], ["Sheet 12", 80], ["Sheet 13", 80], ["Sheet 14", 80],
];

const DashGlyph = () => (
  <svg width="13" height="13" viewBox="0 0 13 13">
    <path d="M.5.5h12v12H.5zM6.5.5v12M.5 6.5h12" fill="none" stroke="#666" />
  </svg>
);

const AddIcon = ({ d }) => (
  <svg width="20" height="20" viewBox="0 0 20 20">
    <path d={d} fill="none" stroke="#666" />
    <path d="M10 15h9M14.5 10.5v9" stroke="#555" strokeWidth="2" />
  </svg>
);

/* ---------- taskbar icons ---------- */
const ChromeIcon = () => (
  <svg width="31" height="31" viewBox="0 0 32 32">
    <path d="M16 16L4 10A14.5 14.5 0 0 1 29 10H16Z" fill="#e8453c" />
    <path d="M16 16L29 10A14.5 14.5 0 0 1 16 30.5Z" fill="#fbc02d" />
    <path d="M16 16V30.5A14.5 14.5 0 0 1 4 10Z" fill="#34a853" />
    <circle cx="16" cy="16" r="7" fill="#fff" />
    <circle cx="16" cy="16" r="5.5" fill="#3f7fe8" />
  </svg>
);
const TASK = spaced([
  {
    x: 26, w: 100, plain: true,
    el: (
      <Watch>
        <WatchIcon>
          <svg width="27" height="27" viewBox="0 0 27 27">
            <rect x="0" y="0" width="27" height="26" rx="1" fill="#2a9a1c" />
            <path d="M14 5a5 5 0 0 0-3 9v3h6v-3a5 5 0 0 0-3-9z" fill="#e8f8d8" />
            <rect x="6" y="20" width="15" height="2" fill="#d8f000" />
          </svg>
          <Badge>1</Badge>
        </WatchIcon>
        <TwoLines $up={-2}>
          Watchlist
          <Muted>Ideas</Muted>
        </TwoLines>
      </Watch>
    ),
  },
  {
    x: 447, w: 30,
    el: (
      <svg width="30" height="30" viewBox="0 0 30 30">
        <rect x="0" y="0" width="14.5" height="14.5" fill="#35b4ef" />
        <rect x="15.5" y="0" width="14.5" height="14.5" fill="#35b4ef" />
        <rect x="0" y="15.5" width="14.5" height="14.5" fill="#0c7fd6" />
        <rect x="15.5" y="15.5" width="14.5" height="14.5" fill="#0c7fd6" />
      </svg>
    ),
  },
  {
    x: 493, w: 272,
    el: (
      <SearchPill>
        <svg width="20" height="20" viewBox="0 0 20 20">
          <circle cx="8.5" cy="8.5" r="6.5" fill="none" stroke="#1c1c1c" strokeWidth="2" />
          <path d="M13 13l6 6" stroke="#1c1c1c" strokeWidth="2.2" />
        </svg>
        Search
        <SearchArt width="62" height="34" viewBox="0 0 62 34">
          <path d="M30 32L42 16C50 11 58 13 62 16C62 24 58 32 52 33H34Z" fill="#e6c48e" />
          <ellipse cx="22" cy="23" rx="22" ry="10" fill="#6eb2e6" transform="rotate(-22 22 23)" />
          <ellipse cx="23" cy="23" rx="13" ry="5" fill="#a8d8f6" transform="rotate(-22 23 23)" />
          <path d="M47 17l1-9M56 17l-1-8" stroke="#7a5a34" strokeWidth="1.5" />
          <path d="M48 8C44 3 41 5 39 8M48 8c4-5 7-4 9-1M48 8c-1-5 1-7 3-8M55 8c3-5 5-5 7-3" stroke="#3d8a2e" strokeWidth="2.5" fill="none" />
          <path d="M43 27l5-3 2 3" stroke="#e0507a" strokeWidth="2" fill="none" />
        </SearchArt>
      </SearchPill>
    ),
  },
  {
    x: 784, w: 29,
    el: (
      <svg width="29" height="36" viewBox="0 0 29 36">
        <rect x="7" y="0" width="22" height="24" rx="2" fill="#f4f4f4" stroke="#d8d8d8" />
        <rect x="0" y="9" width="22" height="27" rx="2" fill="#1d1d1d" />
        <rect x="7" y="9" width="15" height="15" fill="#c4c4c4" />
      </svg>
    ),
  },
  {
    x: 838, w: 32,
    el: (
      <svg width="32" height="32" viewBox="0 0 32 32">
        <defs>
          <linearGradient id="cop1" x1="0" y1="0" x2="1" y2="1">
            <stop offset="0" stopColor="#2f8fe8" />
            <stop offset=".5" stopColor="#35c4a8" />
            <stop offset="1" stopColor="#f6c13a" />
          </linearGradient>
          <linearGradient id="cop2" x1="1" y1="0" x2="0" y2="1">
            <stop offset="0" stopColor="#8a5cf0" />
            <stop offset=".6" stopColor="#ef5fa7" />
            <stop offset="1" stopColor="#f5a63a" />
          </linearGradient>
        </defs>
        <path d="M12 1c-4 0-5 3-6 6L2 21c-1 5 2 7 6 7h4l6-19c1-5-2-8-6-8z" fill="url(#cop1)" />
        <path d="M20 31c4 0 5-3 6-6l4-14c1-5-2-7-6-7h-4l-6 19c-1 5 2 8 6 8z" fill="url(#cop2)" />
        <path d="M13 11h6l-1 10h-6z" fill="#fff" opacity=".9" />
      </svg>
    ),
  },
  {
    x: 893, w: 31, dot: true,
    el: (
      <svg width="31" height="34" viewBox="0 0 31 34">
        <path d="M0 2h12l3 3h16v5H0z" fill="#d99c12" />
        <rect x="0" y="8" width="31" height="26" rx="1" fill="#fdd84f" />
        <rect x="11" y="23" width="16" height="10" rx="1" fill="#0f7fd0" />
        <rect x="14" y="26" width="10" height="1.6" fill="#bfe3fb" />
      </svg>
    ),
  },
  {
    x: 948, w: 29,
    el: (
      <svg width="29" height="32" viewBox="0 0 29 32">
        <path d="M9 5V2h11v3" fill="none" stroke="#2b8fd8" strokeWidth="2" />
        <rect x="0" y="5" width="29" height="27" rx="3" fill="#114f8c" />
        <rect x="8" y="10" width="6" height="6" fill="#f0562a" />
        <rect x="15" y="10" width="6" height="6" fill="#7cb82f" />
        <rect x="8" y="17" width="6" height="6" fill="#2ea8e6" />
        <rect x="15" y="17" width="6" height="6" fill="#fbbc09" />
      </svg>
    ),
  },
  {
    x: 1003, w: 31,
    el: (
      <svg width="31" height="30" viewBox="0 0 31 30" fill="#0a0a0a">
        <path d="M8 0l7 5-7 5-7-5zM23 0l7 5-7 5-7-5zM8 11l7 5-7 5-7-5zM23 11l7 5-7 5-7-5zM15.5 19l7 5-7 6-7-6z" />
      </svg>
    ),
  },
  {
    x: 1058, w: 30,
    el: (
      <svg width="30" height="36" viewBox="0 0 30 36">
        <defs>
          <linearGradient id="dia" x1="0" y1="0" x2="1" y2="0">
            <stop offset="0" stopColor="#f0189a" />
            <stop offset=".55" stopColor="#ee2a55" />
            <stop offset="1" stopColor="#f0501a" />
          </linearGradient>
        </defs>
        <path d="M15 0l15 18-15 18L0 18z" fill="url(#dia)" />
      </svg>
    ),
  },
  {
    x: 1112, w: 38,
    el: (
      <svg width="38" height="38" viewBox="0 0 38 38">
        <circle cx="15" cy="22" r="15" fill="#1b93d0" />
        <circle cx="15" cy="22" r="12" fill="none" stroke="#fff" strokeWidth="1" />
        <circle cx="28" cy="9" r="9.5" fill="#fbc30f" />
        <path d="M10 18c0-5 10-5 10 0 0 4-5 4-5 8" fill="none" stroke="#fff" strokeWidth="3" />
        <circle cx="15" cy="31" r="1.8" fill="#fff" />
      </svg>
    ),
  },
  {
    x: 1168, w: 30,
    el: (
      <svg width="30" height="34" viewBox="0 0 30 34">
        <ellipse cx="15" cy="17" rx="12" ry="14" fill="none" stroke="#d31027" strokeWidth="5.5" />
      </svg>
    ),
  },
  { x: 1222, w: 31, dot: true, el: <ChromeIcon /> },
  {
    x: 1279, w: 28, dot: true,
    el: (
      <svg width="28" height="34" viewBox="0 0 28 34">
        <path d="M5 2h18l4 6-1 10-4 9-8 6-8-6-4-9-1-10z" fill="#f1531f" />
        <path d="M7 11l5-1 2 1 2-1 5 1-3 8-2 4h-4l-2-4z" fill="#fff" />
        <path d="M11 14h2M15 14h2M12 22h4" stroke="#f1531f" strokeWidth="1.5" />
      </svg>
    ),
  },
  {
    x: 1332, w: 31,
    el: (
      <svg width="31" height="31" viewBox="0 0 31 31">
        <defs>
          <linearGradient id="edge" x1="0" y1="0" x2="1" y2="1">
            <stop offset="0" stopColor="#35c1b1" />
            <stop offset="1" stopColor="#8fd34f" />
          </linearGradient>
        </defs>
        <circle cx="15.5" cy="15.5" r="15" fill="url(#edge)" />
        <path d="M1 15C2 6 9 1 16 1c8 0 14 6 14 12 0 4-4 6-7 5 1-6-3-9-8-9C9 9 3 11 1 15z" fill="#1185cf" />
        <path d="M1 15c0 8 6 15 14 15 2 0 5-1 6-2-6 1-12-3-12-8 0-4 3-7 6-8-6-1-12 0-14 3z" fill="#0d5fa8" />
      </svg>
    ),
  },
  {
    x: 1387, w: 31, dot: true,
    el: (
      <svg width="31" height="31" viewBox="0 0 31 31">
        <path d="M2 29l2-7a14 14 0 1 1 5 5z" fill="#fff" stroke="#1da851" strokeWidth="3" />
        <path d="M11 8c-2 1-3 3-2 6 2 5 5 8 9 9 3 1 5-1 6-3l-4-3-2 2c-3-1-5-3-6-6l2-2z" fill="#1da851" />
      </svg>
    ),
  },
  {
    x: 1435, w: 48, on: true, dot: true,
    el: (
      <svg width="30" height="32" viewBox="0 0 30 32">
        <rect x="0" y="0" width="30" height="32" fill="#fafcfd" stroke="#e2e8ee" />
        <g transform="translate(2 3) scale(1.09)">
          <TableauMark size={24} colored={false} />
        </g>
      </svg>
    ),
  },
  {
    x: 1570, w: 20,
    el: <svg width="18" height="12" viewBox="0 0 18 12"><path d="M2 10l7-7 7 7" fill="none" stroke="#222" strokeWidth="1.6" /></svg>,
  },
  {
    x: 1609, w: 26,
    el: (
      <svg width="26" height="28" viewBox="0 0 26 28">
        <path d="M6 13C6 7 11 3 19 6M20 15c0 6-5 10-13 7M17 2l3 4-4 3M9 26l-3-4 4-3" fill="none" stroke="#222" strokeWidth="1.5" />
        <circle cx="19" cy="19" r="5" fill="#f5920f" />
      </svg>
    ),
  },
  {
    x: 1650, w: 36,
    el: <TwoLines $align="center">ENG<br />IN</TwoLines>,
  },
  {
    x: 1704, w: 20,
    el: (
      <svg width="20" height="20" viewBox="0 0 20 20">
        <path d="M1 7c5-5 13-5 18 0M4 10c3-3 9-3 12 0M7 13c2-1.500 4-1.500 6 0" fill="none" stroke="#222" strokeWidth="1.4" />
        <circle cx="10" cy="16" r="1.6" fill="#222" />
      </svg>
    ),
  },
  {
    x: 1734, w: 20,
    el: (
      <svg width="20" height="20" viewBox="0 0 20 20">
        <path d="M2 7v6h3l5 4V3L5 7z" fill="none" stroke="#222" strokeWidth="1.3" />
        <path d="M13 7c1.500 2 1.500 4 0 6M16 4c3 4 3 8 0 12" fill="none" stroke="#777" strokeWidth="1.2" />
      </svg>
    ),
  },
  {
    x: 1765, w: 20,
    el: (
      <svg width="20" height="14" viewBox="0 0 20 14">
        <rect x="1" y="1" width="16" height="12" rx="2.500" fill="none" stroke="#222" strokeWidth="1.3" />
        <rect x="3" y="3" width="6" height="8" rx="1" fill="#222" />
        <rect x="18" y="5" width="1.500" height="4" fill="#222" />
      </svg>
    ),
  },
  {
    x: 1805, w: 91,
    el: <TwoLines $align="right">06:09<br />19 December</TwoLines>,
  },
]);

const STATUS_NAV = "M1 1v8M13 1L9 5l4 4zM23 1l4 4-4 4zM35 1v8";

export default function App() {
  return (
    <Page>
      <GlobalStyle />
      <TitleBar>
        <TitleIcon>
          <TableauMark size={15} colored={false} />
        </TitleIcon>
        Tableau - Book1
        <WindowButtons>
          <svg width="12" height="12" viewBox="0 0 12 12"><path d="M0 6h12" stroke="#222" /></svg>
          <svg width="12" height="14" viewBox="0 0 12 14"><path d="M1.500 3.500h7.500v9H1.500zM3.500 3.500V1.500h7v8h-1.500" fill="none" stroke="#222" strokeWidth="1.100" /></svg>
          <svg width="14" height="14" viewBox="0 0 14 14"><path d="M1 1l12 12M13 1L1 13" stroke="#222" /></svg>
        </WindowButtons>
      </TitleBar>
      <MenuBar>
        {MENU.map(([a, m, b]) => (
          <span key={a + m + b}>
            {a}
            <Mnemonic>{m}</Mnemonic>
            {b}
          </span>
        ))}
      </MenuBar>
      <Toolbar>
        {TOOLS.map((t, i) => (
          <ToolSlot key={i} $w={t.w} $gap={t.gap}>
            {t.el}
          </ToolSlot>
        ))}
        <ShowMeTab>
          <svg width="14" height="16" viewBox="0 0 14 16">
            <rect x="0" y="0" width="11" height="3" fill="#7d6a94" />
            <rect x="0" y="4" width="14" height="3" fill="#7da4cc" />
            <rect x="0" y="8.500" width="5" height="3" fill="#f5ae7d" />
            <rect x="0" y="12.500" width="8" height="3" fill="#f5808f" />
          </svg>
          Show Me
        </ShowMeTab>
      </Toolbar>
      <Main>
        <Side>
          <SideTabs>
            <SideTabActive>Dashboard</SideTabActive>
            <SideTab>
              Layout
              <svg width="8" height="12" viewBox="0 0 8 12"><path d="M6 1L2 6l4 5" fill="none" stroke="#777" strokeWidth="1.2" /></svg>
            </SideTab>
          </SideTabs>
          <Section $h={118}>
            <DeviceRow $on>Default</DeviceRow>
            <DeviceRow>Phone</DeviceRow>
            <PreviewButton>Device Preview</PreviewButton>
          </Section>
          <Section $h={76}>
            <SectionHead>Size</SectionHead>
            <SizeSelect>
              Desktop Browser (1000 x 80...
              <Caret />
            </SizeSelect>
          </Section>
          <Section $h={332}>
            <SectionHead>Sheets</SectionHead>
            <SheetsBody>
              <SheetList>
                {SHEET_ROWS.map(([name, used]) => (
                  <SheetRow key={name}>
                    <SheetIcon used={used} />
                    {name}
                  </SheetRow>
                ))}
              </SheetList>
              <Track $w={12} $top={100}>
                <Thumb $w={12} $h={159} $c="#e0e0e0" />
              </Track>
            </SheetsBody>
          </Section>
          <Section $h={293} $last>
            <SectionHead $pad="4px 0 0 12px" $weight={500} $size={15.5}>Objects</SectionHead>
            <ObjectsBody>
              <ObjectList>
                {OBJECTS.map(([name, icon]) => (
                  <ObjectRow key={name}>
                    <svg width="16" height="17" viewBox="0 0 16 17">{icon}</svg>
                    {name}
                  </ObjectRow>
                ))}
              </ObjectList>
              <Track $w={17} $top={17}>
                <Thumb $w={13} $h={78} $c="#c0c0c0" />
              </Track>
            </ObjectsBody>
            <Segmented>
              <SegButton $on>Tiled</SegButton>
              <SegButton>Floating</SegButton>
            </Segmented>
            <CheckRow>
              <CheckBox />
              Show dashboard title
            </CheckRow>
          </Section>
        </Side>
        <Canvas>
          <Dashboard>
            <Cell>
              <SheetTitle $h={55} $top={15} $left={15.5}>Analysing Sales Trends</SheetTitle>
              <SalesBars />
            </Cell>
            <Cell>
              <SheetTitle $h={55} $top={15} $left={10.5}>Customer Segmentation</SheetTitle>
              <Segmentation />
            </Cell>
            <RightColumn>
              <SmallTitle $pad="15px 0 1px 12px" $size={13} $line={20}>Profit to Sales Ratio</SmallTitle>
              <RatioBars />
              <Legend title="Segment" top={0} rows={[["Consumer", BLUE], ["Corporate", ORANGE], ["Home Office", RED]]} />
              <SmallTitle $pad="13px 0 0 12px" $size={14.9} $line={20.7}>
                Payment Mode
                <br />
                Comparison
              </SmallTitle>
              <PaymentBars />
              <Legend title="Measure Names" top={3} rows={[["Profit", BLUE], ["Sales", RED]]} />
              <Legend title="Returns" top={6} rows={[["1", BLUE], ["#N/A", ORANGE]]} />
              <Legend title="Category" top={5.5} rows={[["Furniture", BLUE], ["Office Supplies", ORANGE], ["Technology", RED]]} />
            </RightColumn>
            <Cell>
              <SheetTitle $h={40} $top={2} $left={15.5}>Seasonal Sales trends</SheetTitle>
              <Seasonal />
            </Cell>
            <Cell>
              <SheetTitle $h={40} $top={2} $left={10.5}>Yearly Profit Comparison</SheetTitle>
              <Yearly />
            </Cell>
          </Dashboard>
          <ShowMePanel>
            <TileGrid>
              {TILES.map((tile, i) => (
                <Tile key={i}>
                  <MiniChart tile={tile} col={i % 3} row={Math.floor(i / 3)} />
                </Tile>
              ))}
            </TileGrid>
            <SelectView>Select view</SelectView>
          </ShowMePanel>
        </Canvas>
      </Main>
      <TabBar>
        <SheetTab $w={162} $left>
          <svg width="9" height="14" viewBox="0 0 9 14">
            <path d="M1 3c0-2.500 7-2.500 7 0v8c0 2.500-7 2.500-7 0zM1 3c0 2.500 7 2.500 7 0" fill="none" stroke="#777" />
          </svg>
          Data Source
        </SheetTab>
        {SHEET_TABS.map(([t, w]) => (
          <SheetTab key={t} $w={w} $pr={2}>{t}</SheetTab>
        ))}
        <SheetTab $w={125} $on><DashGlyph />Dashboard 1</SheetTab>
        <SheetTab $w={125}><DashGlyph />Dashboard 2</SheetTab>
        <SheetTab $w={32}><AddIcon d="M2 1h11v13H2zM5 11V8M7.500 11V5M10 11V7" /></SheetTab>
        <SheetTab $w={32}><AddIcon d="M2 1h11v13H2zM7.500 1v13M2 7.500h11" /></SheetTab>
        <SheetTab $w={32}><AddIcon d="M2 2c2-1 4-1 5 1 1-2 3-2 5-1v12c-2-1-4-1-5 1-1-2-3-2-5-1zM7 3v11" /></SheetTab>
      </TabBar>
      <StatusBar>
        <StatusCell $plain $w={1501} />
        <StatusCell $w={158} />
        <StatusCell $w={30} />
        <StatusCell $w={33} />
        <StatusCell $w={57} />
        <StatusCell $w={71}>
          <svg width="55" height="12" viewBox="0 0 36 10" preserveAspectRatio="none">
            <path d={STATUS_NAV} stroke="#c8c8c8" fill="#c8c8c8" />
          </svg>
        </StatusCell>
        <StatusCell $w={70} $gap={10}>
          <svg width="13" height="14" viewBox="0 0 13 14" fill="#bdbdbd">
            <path d="M0 0h3v3H0zM5 0h3v3H5zM10 0h3v3h-3zM0 5h3v3H0zM5 5h3v3H5zM10 5h3v3h-3zM0 10h3v3H0zM5 10h3v3H5zM10 10h3v3h-3z" />
          </svg>
          <svg width="13" height="14" viewBox="0 0 13 14" fill="#a9a9a9">
            <path d="M0 0h13v8H0zM0 10h3v3H0zM5 10h3v3H5zM10 10h3v3h-3z" />
          </svg>
          <svg width="12" height="14" viewBox="0 0 12 14" fill="#6f6f6f">
            <path d="M0 0h12v14H0z" />
          </svg>
        </StatusCell>
      </StatusBar>
      <TaskBar>
        {TASK.map((t, i) => (
          <TaskItem key={i} $w={t.w} $gap={t.gap} $dot={t.dot} $on={t.on}>
            {t.el}
          </TaskItem>
        ))}
      </TaskBar>
    </Page>
  );
}
